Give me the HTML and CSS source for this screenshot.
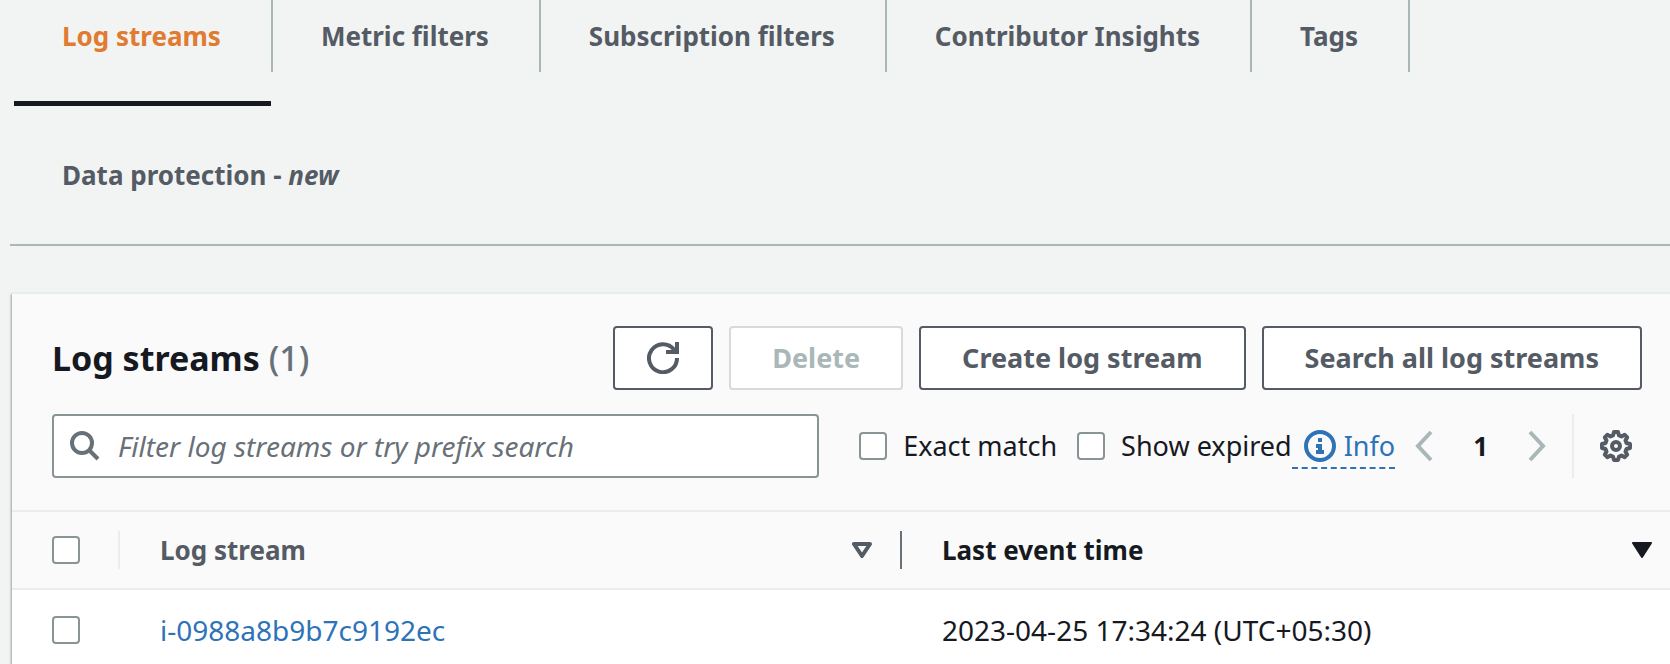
FILE: index.html
```html
<!DOCTYPE html>
<html lang="en">
<head>
<meta charset="utf-8">
<title>Log streams</title>
<link rel="stylesheet" href="styles.css">
</head>
<body>
<nav class="tabs" aria-label="Log group sections">
  <a class="tab tab-active" href="#streams" aria-current="page"><span class="tab-label">Log streams</span></a>
  <a class="tab" href="#metric"><span class="tab-label">Metric filters</span></a>
  <a class="tab" href="#subscription"><span class="tab-label">Subscription filters</span></a>
  <a class="tab" href="#insights"><span class="tab-label">Contributor Insights</span></a>
  <a class="tab" href="#tags"><span class="tab-label">Tags</span></a>
  <a class="tab tab-wrapped" href="#protection"><span class="tab-label">Data protection - <em>new</em></span></a>
</nav>

<main class="panel" id="streams">
  <header class="panel-header">
    <div class="title-row">
      <h1 class="title">Log streams <span class="count">(1)</span></h1>
      <div class="actions">
        <button class="button button-icon" type="button" aria-label="Refresh">
          <svg class="icon" viewBox="0 0 32 32" fill="none" stroke="currentColor" stroke-width="4"><path d="M30 16A14 14 0 1 1 27 7.500L30 10"/><path d="M30 0V10H19"/></svg>
        </button>
        <button class="button" type="button" disabled>Delete</button>
        <button class="button" type="button">Create log stream</button>
        <button class="button" type="button">Search all log streams</button>
      </div>
    </div>
    <div class="filter-row">
      <div class="search">
        <svg class="search-icon" viewBox="0 0 30 30" fill="none" stroke="currentColor" stroke-width="4"><circle cx="12" cy="12" r="10"/><path d="M19 19L28 28"/></svg>
        <input class="search-input" type="text" aria-label="Filter log streams" placeholder="Filter log streams or try prefix search">
      </div>
      <div class="options">
        <label class="option"><input class="checkbox" type="checkbox">Exact match</label>
        <div class="option-group">
          <label class="option"><input class="checkbox" type="checkbox">Show expired</label>
          <a class="info" href="#info"><svg class="icon" viewBox="0 0 32 32"><circle cx="16" cy="16" r="14" fill="none" stroke="currentColor" stroke-width="4"/><path fill="currentColor" d="M14 8h4v4h-4zM12 14h6v6h2v4h-8v-4h2v-2h-2z"/></svg>Info</a>
        </div>
      </div>
      <div class="pagination">
        <button class="plain-button" type="button" aria-label="Previous page"><svg class="chevron" viewBox="0 0 18 32" fill="none" stroke="currentColor" stroke-width="4"><path d="M16 2L3 16L16 30"/></svg></button>
        <span class="page">1</span>
        <button class="plain-button" type="button" aria-label="Next page"><svg class="chevron" viewBox="0 0 18 32" fill="none" stroke="currentColor" stroke-width="4"><path d="M2 2L15 16L2 30"/></svg></button>
      </div>
      <div class="settings">
        <button class="plain-button settings-button" type="button" aria-label="Preferences"><svg class="icon" viewBox="0 0 32 32" fill="none" stroke="currentColor" stroke-width="4" stroke-linejoin="round"><path d="M14 2h4l1 3.500 2.500 1 3.200-1.700 2.500 2.500-1.700 3.200 1 2.500 3.500 1v4l-3.500 1-1 2.500 1.700 3.200-2.500 2.500-3.200-1.700-2.500 1-1 3.500h-4l-1-3.500-2.500-1-3.200 1.700-2.500-2.500 1.700-3.200-1-2.500-3.500-1v-4l3.500-1 1-2.500-1.700-3.200 2.500-2.500 3.200 1.700 2.500-1z"/><circle cx="16" cy="16" r="4"/></svg></button>
      </div>
    </div>
  </header>
  <table class="table">
    <colgroup><col class="col-select"><col class="col-name"><col></colgroup>
    <thead>
      <tr>
        <th scope="col"><div class="head-cell head-select"><input class="checkbox" type="checkbox" aria-label="Select all log streams"></div></th>
        <th scope="col"><div class="head-cell head-name">Log stream<svg class="sort" viewBox="0 0 20 16" fill="none" stroke="currentColor" stroke-width="4" stroke-linejoin="round"><path d="M2 2H18L10 14Z"/></svg></div></th>
        <th scope="col" aria-sort="descending"><div class="head-cell head-time">Last event time<svg class="sort" viewBox="0 0 20 16" fill="currentColor" stroke="currentColor" stroke-width="2" stroke-linejoin="round"><path d="M1 1H19L10 15Z"/></svg></div></th>
      </tr>
    </thead>
    <tbody>
      <tr>
        <td><input class="checkbox" type="checkbox" aria-label="Select i-0988a8b9b7c9192ec"></td>
        <td><a class="link" href="#stream">i-0988a8b9b7c9192ec</a></td>
        <td>2023-04-25 17:34:24 (UTC+05:30)</td>
      </tr>
    </tbody>
  </table>
</main>
</body>
</html>
```
FILE: styles.css
```css
* { box-sizing: border-box; }

body {
  margin: 0;
  background: #f2f3f3;
  color: #16191f;
  font-family: "Noto Sans", "Open Sans", sans-serif;
  font-size: 26px;
  line-height: 36px;
}

button, input { font: inherit; color: inherit; }
a { color: #2e73b8; text-decoration: none; }
svg { display: block; flex: none; }

.tabs {
  display: flex;
  flex-wrap: wrap;
  column-gap: 2px;
  margin-left: 10px;
  padding-left: 4px;
  border-bottom: 2px solid #aab7b8;
}
.tab {
  padding-bottom: 29px;
  border-bottom: 5px solid transparent;
  color: #545b64;
  font-weight: 700;
}
/* The divider sits in the gap, so the active bar stops short of it. */
.tab-label {
  display: block;
  margin-right: -2px;
  padding: 18px 50px 18px 48px;
  border-right: 2px solid #aab7b8;
}
.tab-active { border-color: #16191f; color: #e07b31; }
.tab-wrapped { flex-basis: 100%; padding: 33px 0 28px; }
.tab-wrapped .tab-label { border-right: 0; }

.panel {
  margin: 46px 0 0 12px;
  border-top: 2px solid #eaeded;
  background: #fff;
  box-shadow: -1px 2px 2px #9aa3a6;
}
.panel-header {
  padding: 32px 28px 32px 40px;
  background: #fafafa;
  border-bottom: 2px solid #eaeded;
}
.title-row, .filter-row, .actions, .options, .option, .option-group, .info, .pagination, .settings {
  display: flex;
  align-items: center;
}
.title-row { justify-content: space-between; }
.title { margin: 0; font-size: 34px; line-height: 44px; }
.count { color: #687078; font-weight: 500; }
.actions { gap: 16px; }
.button {
  height: 64px;
  padding: 0 41px;
  border: 2px solid #545b64;
  border-radius: 4px;
  background: #fff;
  color: #545b64;
  font-size: 27px;
  font-weight: 700;
  white-space: nowrap;
}
.button:disabled { border-color: #d5dbdb; color: #aab7b8; }
.button-icon { padding: 0 32px; }
.icon { width: 32px; height: 32px; }

.filter-row { margin-top: 24px; white-space: nowrap; }
.search {
  display: flex;
  align-items: center;
  flex: 1;
  height: 64px;
  padding: 0 16px;
  gap: 18px;
  border: 2px solid #879596;
  border-radius: 4px;
  background: #fff;
  color: #687078;
}
.search-icon { width: 30px; height: 30px; }
.search-input { flex: 1; min-width: 0; padding: 0; border: 0; outline: 0; background: none; font-size: 28px; }
.search-input::placeholder { color: #687078; opacity: 1; font-style: italic; }
.options { gap: 20px; margin-left: 40px; font-size: 27px; }
.option { gap: 16px; }
.checkbox {
  appearance: none;
  display: block;
  flex: none;
  width: 28px;
  height: 28px;
  margin: 0;
  border: 2px solid #879596;
  border-radius: 4px;
  background: #fff;
}
.checkbox:checked { background: #2e73b8; }
.info { gap: 8px; padding: 5px 0 3px 12px; border-bottom: 2px dashed #2e73b8; }
.plain-button { padding: 0; border: 0; background: none; color: #aab7b8; }
.pagination { gap: 40px; margin: 0 26px 0 20px; }
.chevron { width: 18px; height: 32px; }
.page { font-weight: 700; }
.settings { height: 64px; padding: 0 10px 0 26px; border-left: 2px solid #eaeded; }
.settings-button { color: #545b64; }

.table { width: 100%; table-layout: fixed; border-collapse: collapse; }
.col-select { width: 108px; }
.col-name { width: 782px; }
th { padding: 19px 0; background: #fafafa; border-bottom: 2px solid #eaeded; text-align: left; }
.head-cell { display: flex; align-items: center; justify-content: space-between; height: 38px; padding-left: 40px; }
.head-select { border-right: 2px solid #eaeded; }
.head-name { padding-right: 28px; border-right: 2px solid #687078; color: #545b64; }
.head-time { padding-right: 18px; }
.sort { width: 20px; height: 16px; }
td { height: 80px; padding: 0 40px; vertical-align: middle; font-size: 28px; }
```
